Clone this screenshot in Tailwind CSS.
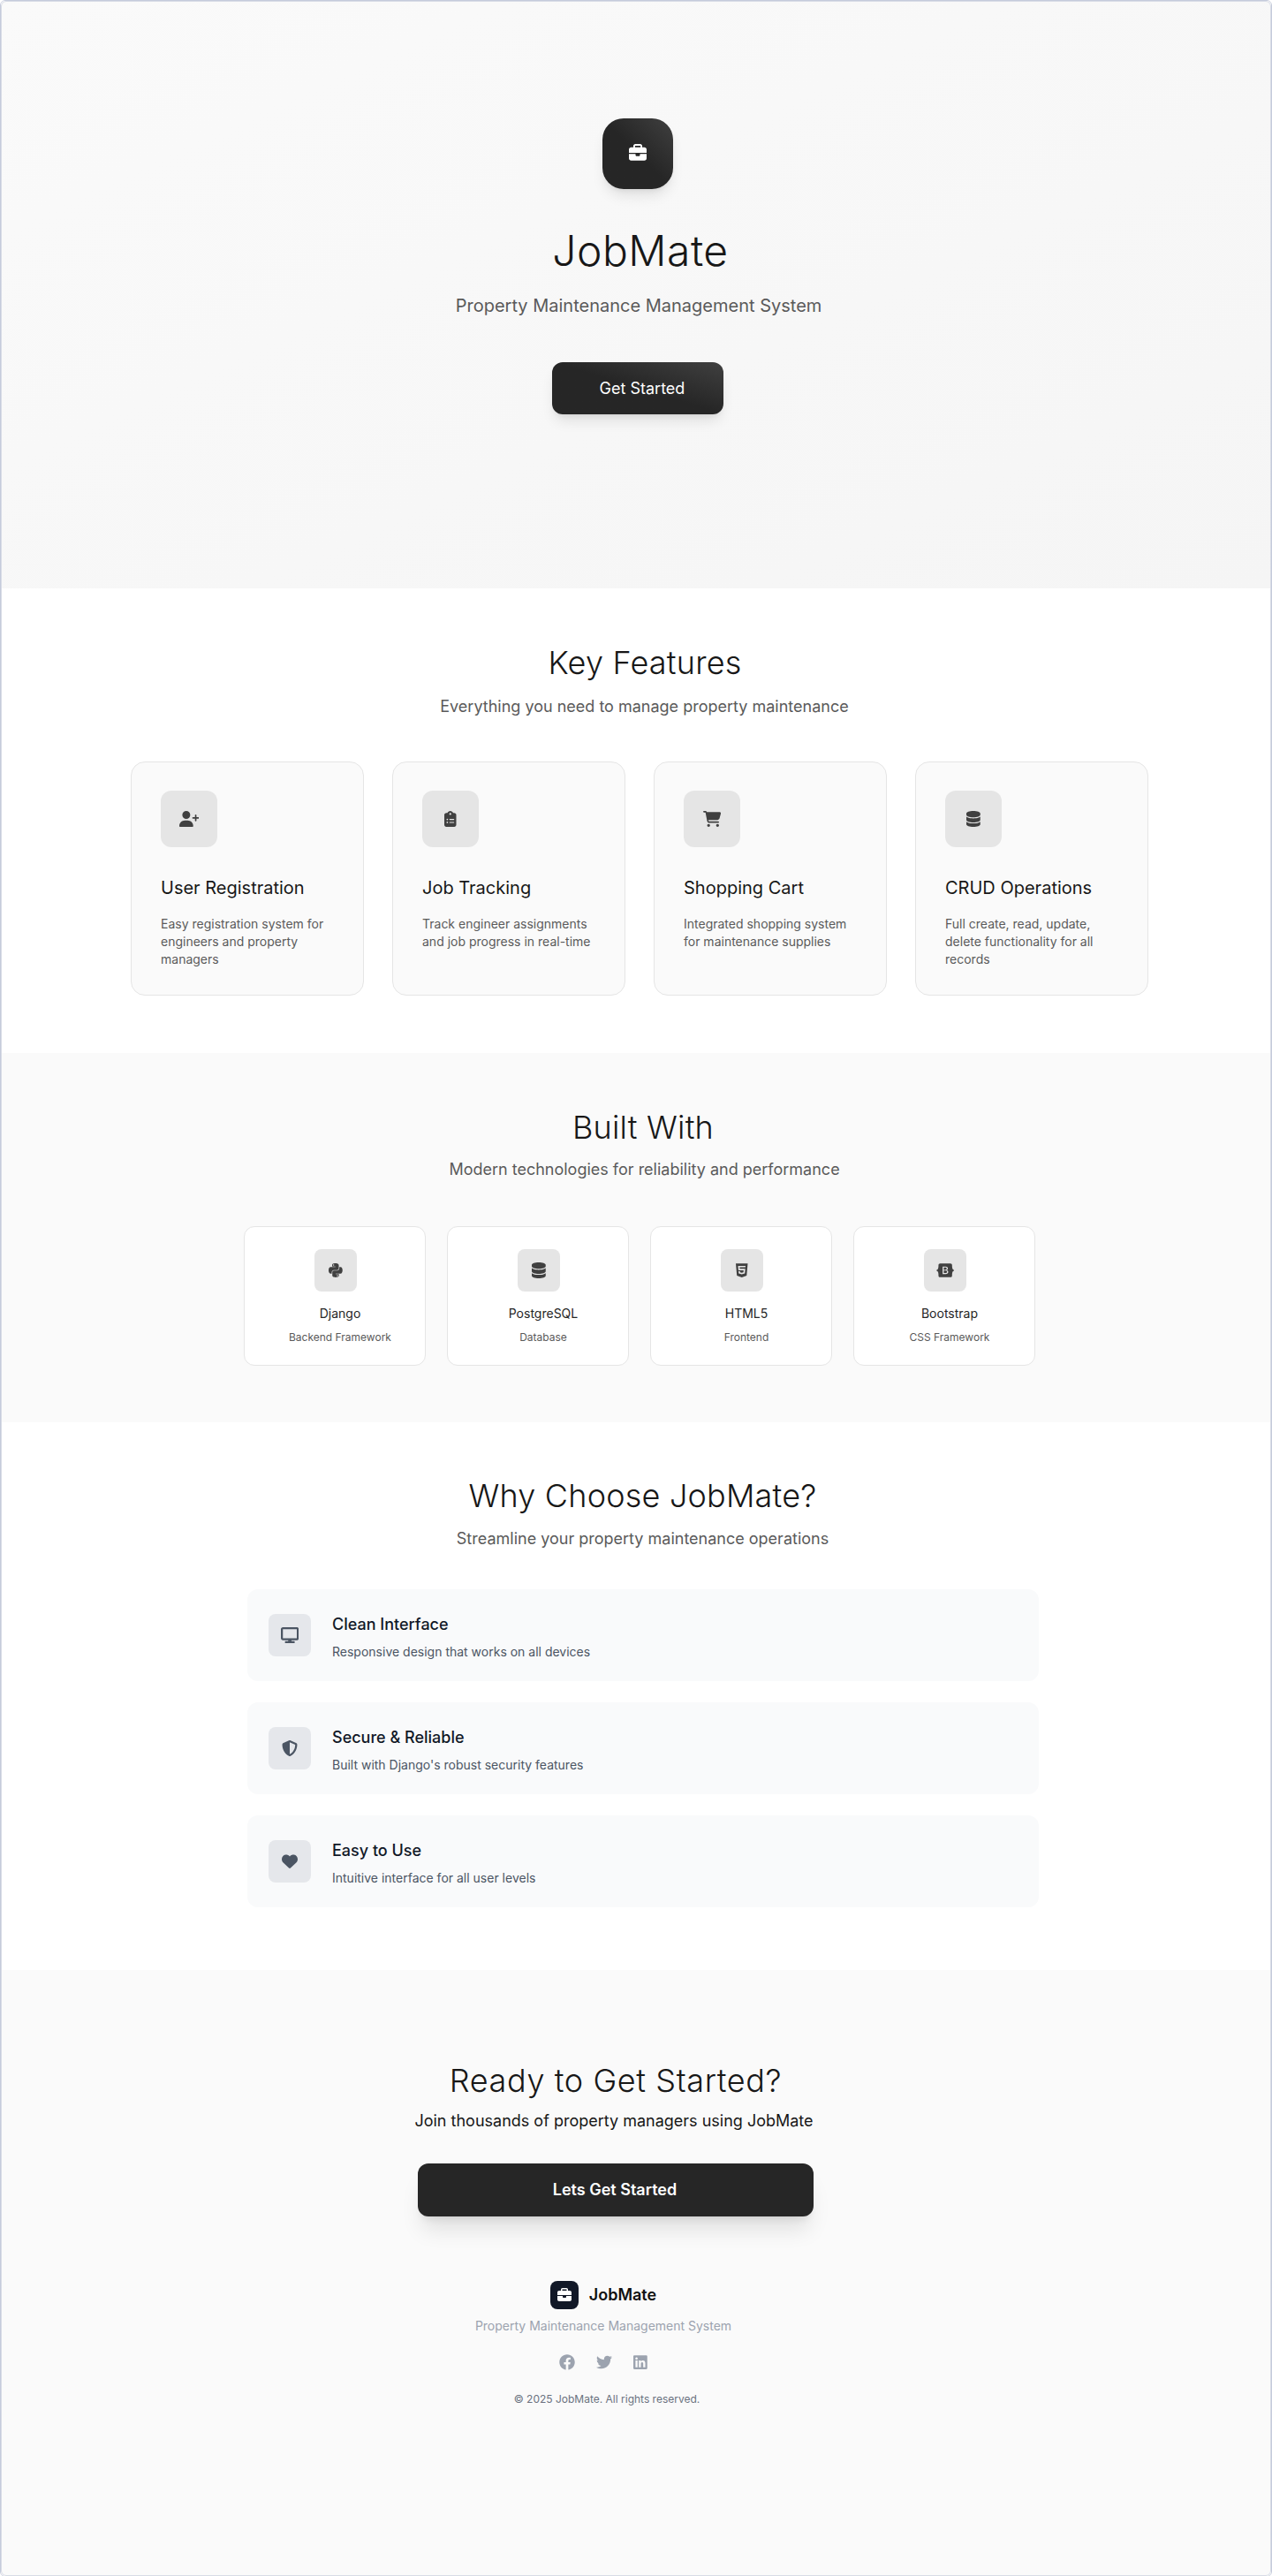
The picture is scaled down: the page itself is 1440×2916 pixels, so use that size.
<!DOCTYPE html>
<html lang="en">
<head>
    <meta charset="UTF-8">
    <meta name="viewport" content="width=device-width, initial-scale=1.0">
    <title>JobMate</title>
    <script src="https://cdn.jsdelivr.net/npm/@tailwindcss/browser@4"></script>
</head>
<body class="bg-white font-['Inter',sans-serif]">
    <div class="relative min-h-[2916px] overflow-hidden rounded-md border border-[#c5cbdb]">
        <!-- Hero -->
        <section class="flex h-[665px] flex-col items-center bg-gradient-to-br from-[#fafafa] to-[#f5f5f5] pt-[133px] pl-[4px]">
            <div class="flex h-20 w-20 items-center justify-center rounded-3xl bg-gradient-to-tr from-[#262626] via-[#262626] to-[#404040] shadow-lg">
                <svg class="-mt-[2px] h-5 w-5" viewBox="0 0 512 512" fill="#fff"><path d="M184 48H328c4.400 0 8 3.600 8 8V96H176V56c0-4.400 3.600-8 8-8zm-56 8V96H64C28.700 96 0 124.700 0 160v96H192 320 512V160c0-35.300-28.700-64-64-64H384V56c0-30.900-25.100-56-56-56H184c-30.900 0-56 25.100-56 56zM512 288H320v32c0 17.700-14.300 32-32 32H224c-17.700 0-32-14.300-32-32V288H0V416c0 35.300 28.700 64 64 64H448c35.300 0 64-28.700 64-64V288z"/></svg>
            </div>
            <h1 class="mt-[46px] pl-[6px] text-5xl leading-[48px] font-light tracking-[.5px] text-[#171717]">JobMate</h1>
            <p class="mt-6 pl-[2px] text-xl font-normal text-[#5a5a5a]">Property Maintenance Management System</p>
            <button class="mt-[50px] h-[59px] w-[194px] rounded-xl bg-gradient-to-tr from-[#262626] via-[#262626] to-[#404040] pl-[10px] text-lg font-normal text-white shadow-lg">Get Started</button>
        </section>

        <!-- Key Features -->
        <section class="bg-white pt-16 pb-[65px]">
            <h2 class="pl-[20px] text-center text-4xl font-light tracking-[.2px] text-[#171717]">Key Features</h2>
            <p class="mt-4 pl-[19px] text-center text-lg font-normal text-[#5a5a5a]">Everything you need to manage property maintenance</p>
            <div class="mt-12 ml-[147px] grid w-[1152px] grid-cols-4 gap-8">
                <div class="h-[265px] rounded-2xl border border-[#e5e5e5] bg-[#fafafa] py-8 pr-6 pl-[33px]">
                    <div class="flex h-16 w-16 items-center justify-center rounded-xl bg-[#e5e5e5]">
                        <svg class="h-[18px] w-[22.500px]" viewBox="0 0 640 512" fill="#404040"><path d="M96 128a128 128 0 1 1 256 0A128 128 0 1 1 96 128zM0 482.300C0 383.800 79.800 304 178.300 304h91.400C368.200 304 448 383.800 448 482.300c0 16.400-13.300 29.700-29.700 29.700H29.700C13.300 512 0 498.700 0 482.300zM504 312V248H440c-13.300 0-24-10.700-24-24s10.700-24 24-24h64V136c0-13.300 10.700-24 24-24s24 10.700 24 24v64h64c13.300 0 24 10.700 24 24s-10.700 24-24 24H552v64c0 13.300-10.700 24-24 24s-24-10.700-24-24z"/></svg>
                    </div>
                    <h3 class="mt-8 text-xl font-normal text-[#171717]">User Registration</h3>
                    <p class="mt-[17px] text-sm font-normal text-[#5a5a5a]">Easy registration system for engineers and property managers</p>
                </div>
                <div class="h-[265px] rounded-2xl border border-[#e5e5e5] bg-[#fafafa] py-8 pr-6 pl-[33px]">
                    <div class="flex h-16 w-16 items-center justify-center rounded-xl bg-[#e5e5e5]">
                        <svg class="h-[18px] w-[13.500px]" viewBox="0 0 384 512" fill="#404040"><path fill-rule="evenodd" d="M192 0c-41.800 0-77.400 26.700-90.500 64H64C28.700 64 0 92.700 0 128V448c0 35.300 28.700 64 64 64H320c35.300 0 64-28.700 64-64V128c0-35.300-28.700-64-64-64H282.500C269.400 26.700 233.800 0 192 0zm0 64a32 32 0 1 1 0 64 32 32 0 1 1 0-64zM72 272a24 24 0 1 1 48 0 24 24 0 1 1 -48 0zm104-16H304c8.800 0 16 7.200 16 16s-7.200 16-16 16H176c-8.800 0-16-7.200-16-16s7.200-16 16-16zM72 368a24 24 0 1 1 48 0 24 24 0 1 1 -48 0zm88 0c0-8.800 7.200-16 16-16H304c8.800 0 16 7.200 16 16s-7.200 16-16 16H176c-8.800 0-16-7.200-16-16z"/></svg>
                    </div>
                    <h3 class="mt-8 text-xl font-normal text-[#171717]">Job Tracking</h3>
                    <p class="mt-[17px] text-sm font-normal text-[#5a5a5a]">Track engineer assignments and job progress in real-time</p>
                </div>
                <div class="h-[265px] rounded-2xl border border-[#e5e5e5] bg-[#fafafa] py-8 pr-6 pl-[33px]">
                    <div class="flex h-16 w-16 items-center justify-center rounded-xl bg-[#e5e5e5]">
                        <svg class="h-[18px] w-[20.250px]" viewBox="0 0 576 512" fill="#404040"><path d="M0 24C0 10.700 10.700 0 24 0H69.500c22 0 41.500 12.800 50.600 32h411c26.300 0 45.500 25 38.600 50.400l-41 152.300c-8.500 31.400-37 53.300-69.500 53.300H170.700l5.400 28.500c2.200 11.300 12.100 19.500 23.600 19.500H488c13.300 0 24 10.700 24 24s-10.700 24-24 24H199.700c-34.600 0-64.300-24.600-70.700-58.500L77.400 54.500c-.7-3.800-4-6.500-7.900-6.500H24C10.700 48 0 37.300 0 24zM128 464a48 48 0 1 1 96 0 48 48 0 1 1 -96 0zm336-48a48 48 0 1 1 0 96 48 48 0 1 1 0-96z"/></svg>
                    </div>
                    <h3 class="mt-8 text-xl font-normal text-[#171717]">Shopping Cart</h3>
                    <p class="mt-[17px] text-sm font-normal text-[#5a5a5a]">Integrated shopping system for maintenance supplies</p>
                </div>
                <div class="h-[265px] rounded-2xl border border-[#e5e5e5] bg-[#fafafa] py-8 pr-6 pl-[33px]">
                    <div class="flex h-16 w-16 items-center justify-center rounded-xl bg-[#e5e5e5]">
                        <svg class="h-[18px] w-[15.750px]" viewBox="0 0 448 512" fill="#404040"><path d="M448 80v48c0 44.200-100.300 80-224 80S0 172.200 0 128V80C0 35.800 100.300 0 224 0S448 35.800 448 80zM393.200 214.700c20.800-7.400 39.900-16.900 54.800-28.600V288c0 44.200-100.300 80-224 80S0 332.200 0 288V186.100c14.900 11.800 34 21.200 54.800 28.600C99.700 230.700 159.500 240 224 240s124.300-9.300 169.200-25.300zM0 346.100c14.900 11.800 34 21.200 54.800 28.600C99.700 390.700 159.500 400 224 400s124.300-9.300 169.200-25.300c20.800-7.400 39.900-16.900 54.800-28.600V432c0 44.200-100.300 80-224 80S0 476.200 0 432V346.100z"/></svg>
                    </div>
                    <h3 class="mt-8 text-xl font-normal text-[#171717]">CRUD Operations</h3>
                    <p class="mt-[17px] text-sm font-normal text-[#5a5a5a]">Full create, read, update, delete functionality for all records</p>
                </div>
            </div>
        </section>

        <!-- Built With -->
        <section class="bg-[#fafafa] pt-16 pb-16">
            <h2 class="pl-[16px] text-center text-4xl font-light tracking-[.2px] text-[#171717]">Built With</h2>
            <p class="mt-3.5 pl-[19px] text-center text-lg font-normal text-[#5a5a5a]">Modern technologies for reliability and performance</p>
            <div class="mt-[50px] ml-[275px] grid w-[896px] grid-cols-4 gap-6">
                <div class="flex h-[158px] flex-col items-center rounded-xl border border-[#e5e5e5] bg-white pt-[25px] pl-[2px]">
                    <div class="flex h-12 w-12 items-center justify-center rounded-lg bg-[#e5e5e5]">
                        <svg class="h-[18px] w-[15.750px]" viewBox="0 0 448 512" fill="#404040"><path fill-rule="evenodd" d="M439.800 200.500c-7.700-30.900-22.300-54.200-53.400-54.200h-40.100v47.400c0 36.800-31.200 67.800-66.800 67.800H172.700c-29.200 0-53.400 25-53.400 54.300v101.800c0 29 25.200 46 53.400 54.300 33.800 9.900 66.300 11.700 106.800 0 26.900-7.800 53.400-23.500 53.400-54.300v-40.700H226.200v-13.600h160.200c31.100 0 42.600-21.700 53.400-54.200 11.200-33.500 10.700-65.700 0-108.600zM286.200 404c11.100 0 20.100 9.100 20.100 20.300 0 11.300-9 20.400-20.100 20.400-11 0-20.100-9.200-20.100-20.400.1-11.300 9.100-20.300 20.100-20.300zM167.800 248.100h106.800c29.700 0 53.400-24.500 53.400-54.300V91.900c0-29-24.400-50.700-53.400-55.600-35.800-5.900-74.700-5.600-106.800.1-45.200 8-53.400 24.700-53.400 55.600v40.700h106.900v13.600h-147c-31.100 0-58.300 18.700-66.800 54.200-9.800 40.700-10.200 66.100 0 108.600 7.600 31.600 25.700 54.200 56.800 54.200H101v-48.800c0-35.300 30.500-66.400 66.800-66.400zm-6.700-142.600c-11.100 0-20.100-9.100-20.100-20.300.1-11.300 9-20.400 20.100-20.400 11 0 20.100 9.200 20.100 20.400s-9 20.300-20.100 20.300z"/></svg>
                    </div>
                    <span class="mt-[15px] pl-[10px] text-sm text-[#262626]">Django</span>
                    <span class="mt-[9px] pl-[10px] text-xs text-[#5a5a5a]">Backend Framework</span>
                </div>
                <div class="flex h-[158px] flex-col items-center rounded-xl border border-[#e5e5e5] bg-white pt-[25px] pl-[2px]">
                    <div class="flex h-12 w-12 items-center justify-center rounded-lg bg-[#e5e5e5]">
                        <svg class="h-[18px] w-[15.750px]" viewBox="0 0 448 512" fill="#404040"><path d="M448 80v48c0 44.200-100.300 80-224 80S0 172.200 0 128V80C0 35.800 100.300 0 224 0S448 35.800 448 80zM393.200 214.700c20.800-7.400 39.900-16.900 54.800-28.600V288c0 44.200-100.300 80-224 80S0 332.200 0 288V186.100c14.900 11.800 34 21.200 54.800 28.600C99.700 230.700 159.500 240 224 240s124.300-9.300 169.200-25.300zM0 346.100c14.900 11.800 34 21.200 54.800 28.600C99.700 390.700 159.500 400 224 400s124.300-9.300 169.200-25.300c20.800-7.400 39.900-16.900 54.800-28.600V432c0 44.200-100.300 80-224 80S0 476.200 0 432V346.100z"/></svg>
                    </div>
                    <span class="mt-[15px] pl-[10px] text-sm text-[#262626]">PostgreSQL</span>
                    <span class="mt-[9px] pl-[10px] text-xs text-[#5a5a5a]">Database</span>
                </div>
                <div class="flex h-[158px] flex-col items-center rounded-xl border border-[#e5e5e5] bg-white pt-[25px] pl-[2px]">
                    <div class="flex h-12 w-12 items-center justify-center rounded-lg bg-[#e5e5e5]">
                        <svg class="h-[18px] w-[13.500px]" viewBox="0 0 384 512" fill="#404040"><path fill-rule="evenodd" d="M0 32l34.900 395.800L191.500 480l157.600-52.200L384 32H0zm308.200 127.900H124.400l4.100 49.400h175.600l-13.600 148.400-97.900 27v.3h-1.100l-98.700-27.300-6-75.800h47.700L138 320l53.500 14.500 53.700-14.500 6-62.200H84.300L71.500 112.200h241.100l-4.400 47.700z"/></svg>
                    </div>
                    <span class="mt-[15px] pl-[10px] text-sm text-[#262626]">HTML5</span>
                    <span class="mt-[9px] pl-[10px] text-xs text-[#5a5a5a]">Frontend</span>
                </div>
                <div class="flex h-[158px] flex-col items-center rounded-xl border border-[#e5e5e5] bg-white pt-[25px] pl-[2px]">
                    <div class="flex h-12 w-12 items-center justify-center rounded-lg bg-[#e5e5e5]">
                        <svg class="h-[18px] w-[20.250px]" viewBox="0 0 576 512" fill="#404040"><path fill-rule="evenodd" d="M333.500 201.400c0-22.100-15.600-34.300-43-34.300h-50.400v71.200h42.500C315.400 238.200 333.500 225 333.500 201.400zM517 188.600c-9.500-30.900-10.900-68.800-9.800-98.100c1.100-30.500-22.700-58.500-54.700-58.500H123.700c-32.100 0-55.800 28.100-54.700 58.500c1 29.300-.3 67.200-9.800 98.100c-9.600 31-25.700 50.600-52.200 53.100v28.500c26.400 2.500 42.600 22.100 52.200 53.100c9.500 30.900 10.900 68.800 9.800 98.100c-1.100 30.500 22.700 58.500 54.700 58.500h328.700c32.100 0 55.800-28.100 54.700-58.500c-1-29.300 .3-67.200 9.800-98.100c9.600-31 25.700-50.600 52.100-53.100v-28.500C542.700 239.200 526.500 219.600 517 188.600zM300.200 375.100h-97.900V136.800h97.400c43.300 0 71.700 23.400 71.700 59.400c0 25.300-19.100 47.900-43.500 51.800v1.300c33.200 3.600 55.500 26.600 55.500 58.300C383.400 349.700 352.100 375.100 300.200 375.100zM290.200 266.400h-50.100v78.400h52.300c34.200 0 52.300-13.700 52.300-39.500C344.700 279.600 326.100 266.400 290.200 266.400z"/></svg>
                    </div>
                    <span class="mt-[15px] pl-[10px] text-sm text-[#262626]">Bootstrap</span>
                    <span class="mt-[9px] pl-[10px] text-xs text-[#5a5a5a]">CSS Framework</span>
                </div>
            </div>
        </section>

        <!-- Why Choose -->
        <section class="bg-white pt-[63px] pb-[71px]">
            <h2 class="pl-[15px] text-center text-4xl font-light tracking-[.2px] text-[#171717]">Why Choose JobMate?</h2>
            <p class="mt-[15px] pl-[15px] text-center text-lg font-normal text-[#5a5a5a]">Streamline your property maintenance operations</p>
            <div class="mt-[43px] ml-[279px] flex w-[896px] flex-col gap-6">
                <div class="flex h-[104px] items-center gap-6 rounded-xl bg-[#f9fafb] px-6">
                    <div class="flex h-12 w-12 items-center justify-center rounded-lg bg-[#e5e7eb]">
                        <svg class="h-[18px] w-[20.250px]" viewBox="0 0 576 512" fill="#4b5563"><path fill-rule="evenodd" d="M64 0C28.700 0 0 28.700 0 64V352c0 35.300 28.700 64 64 64H240l-10.700 32H160c-17.700 0-32 14.300-32 32s14.300 32 32 32H416c17.700 0 32-14.300 32-32s-14.300-32-32-32H346.700L336 416H512c35.300 0 64-28.700 64-64V64c0-35.300-28.700-64-64-64H64zM512 64V352H64V64H512z"/></svg>
                    </div>
                    <div class="pt-[2px]">
                        <h3 class="text-lg font-[550] leading-7 text-[#111827]">Clean Interface</h3>
                        <p class="mt-[7px] text-sm text-[#4b5563]">Responsive design that works on all devices</p>
                    </div>
                </div>
                <div class="flex h-[104px] items-center gap-6 rounded-xl bg-[#f9fafb] px-6">
                    <div class="flex h-12 w-12 items-center justify-center rounded-lg bg-[#e5e7eb]">
                        <svg class="h-[18px] w-[18px]" viewBox="0 0 512 512" fill="#4b5563"><path fill-rule="evenodd" d="M256 0c4.600 0 9.200 1 13.400 2.900L457.700 82.800c22 9.300 38.400 31 38.300 57.200c-.5 99.200-41.300 280.700-213.600 363.200c-16.700 8-36.100 8-52.800 0C57.300 420.700 16.500 239.200 16 140c-.1-26.200 16.300-47.900 38.300-57.200L242.700 2.900C246.800 1 251.400 0 256 0zm0 66.800V444.800C394 378 431.100 230.100 432 141.400L256 66.800l0 0z"/></svg>
                    </div>
                    <div class="pt-[2px]">
                        <h3 class="text-lg font-[550] leading-7 text-[#111827]">Secure &amp; Reliable</h3>
                        <p class="mt-[7px] text-sm text-[#4b5563]">Built with Django's robust security features</p>
                    </div>
                </div>
                <div class="flex h-[104px] items-center gap-6 rounded-xl bg-[#f9fafb] px-6">
                    <div class="flex h-12 w-12 items-center justify-center rounded-lg bg-[#e5e7eb]">
                        <svg class="h-[18px] w-[18px]" viewBox="0 0 512 512" fill="#4b5563"><path d="M47.600 300.400L228.300 469.100c7.500 7 17.400 10.900 27.700 10.900s20.200-3.900 27.700-10.900L464.400 300.400c30.400-28.300 47.600-68 47.600-109.500v-5.800c0-69.900-50.500-129.500-119.400-141C347 36.500 300.600 51.400 268 84L256 96 244 84c-32.600-32.600-79-47.500-124.600-39.900C50.500 55.600 0 115.200 0 185.100v5.800c0 41.500 17.200 81.200 47.600 109.500z"/></svg>
                    </div>
                    <div class="pt-[2px]">
                        <h3 class="text-lg font-[550] leading-7 text-[#111827]">Easy to Use</h3>
                        <p class="mt-[7px] text-sm text-[#4b5563]">Intuitive interface for all user levels</p>
                    </div>
                </div>
            </div>
        </section>

        <!-- Call to action and footer -->
        <section class="flex min-h-[686px] flex-col bg-[#fafafa] pt-[105px]">
            <div class="ml-[472px] flex w-[448px] flex-col items-center">
                <h2 class="text-4xl font-light tracking-[.6px] text-[#171717]">Ready to Get Started?</h2>
                <p class="mt-3 pr-[4px] text-lg whitespace-nowrap text-[#171717]">Join thousands of property managers using JobMate</p>
                <button class="mt-[34px] h-[60px] w-[448px] rounded-xl bg-[#262626] pr-[2px] text-lg font-semibold text-white shadow-xl">Lets Get Started</button>
            </div>
            <div class="mt-[73px] ml-[536px] flex w-[292px] flex-col items-center">
                <div class="flex items-center gap-3">
                    <div class="flex h-8 w-8 items-center justify-center rounded-lg bg-[#111827]">
                        <svg class="h-4 w-4" viewBox="0 0 512 512" fill="#fff"><path d="M184 48H328c4.400 0 8 3.600 8 8V96H176V56c0-4.400 3.600-8 8-8zm-56 8V96H64C28.700 96 0 124.700 0 160v96H192 320 512V160c0-35.300-28.700-64-64-64H384V56c0-30.900-25.100-56-56-56H184c-30.900 0-56 25.100-56 56zM512 288H320v32c0 17.700-14.300 32-32 32H224c-17.700 0-32-14.300-32-32V288H0V416c0 35.300 28.700 64 64 64H448c35.300 0 64-28.700 64-64V288z"/></svg>
                    </div>
                    <span class="text-lg font-semibold text-[#111111]">JobMate</span>
                </div>
                <p class="mt-[9px] text-sm text-[#9ca3af]">Property Maintenance Management System</p>
                <div class="mt-[22px] flex items-center gap-6">
                    <svg class="h-[18px] w-[18px]" viewBox="0 0 512 512" fill="#9ca3af"><path d="M504 256C504 119 393 8 256 8S8 119 8 256c0 123.780 90.690 226.380 209.250 245V327.690h-63V256h63v-54.640c0-62.150 37-96.480 93.670-96.480 27.140 0 55.520 4.840 55.520 4.840v61h-31.280c-30.800 0-40.410 19.120-40.410 38.730V256h68.780l-11 71.690h-57.780V501C413.310 482.380 504 379.780 504 256z"/></svg>
                    <svg class="h-[18px] w-[18px]" viewBox="0 0 512 512" fill="#9ca3af"><path d="M459.370 151.716c.325 4.548.325 9.097.325 13.645 0 138.720-105.583 298.558-298.558 298.558-59.452 0-114.680-17.219-161.137-47.106 8.447.974 16.568 1.299 25.340 1.299 49.055 0 94.213-16.568 130.274-44.832-46.132-.975-84.792-31.188-98.112-72.772 6.498.974 12.995 1.624 19.818 1.624 9.421 0 18.843-1.300 27.614-3.573-48.081-9.747-84.143-51.980-84.143-102.985v-1.299c13.969 7.797 30.214 12.670 47.431 13.319-28.264-18.843-46.781-51.005-46.781-87.391 0-19.492 5.197-37.360 14.294-52.954 51.655 63.675 129.300 105.258 216.365 109.807-1.624-7.797-2.599-15.918-2.599-24.040 0-57.828 46.782-104.934 104.934-104.934 30.213 0 57.502 12.670 76.670 33.137 23.715-4.548 46.456-13.320 66.599-25.340-7.798 24.366-24.366 44.833-46.132 57.827 21.117-2.273 41.584-8.122 60.426-16.243-14.292 20.791-32.161 39.308-52.628 54.253z"/></svg>
                    <svg class="h-[18px] w-[15.750px]" viewBox="0 0 448 512" fill="#9ca3af"><path fill-rule="evenodd" d="M416 32H31.900C14.300 32 0 46.500 0 64.300v383.400C0 465.500 14.300 480 31.900 480H416c17.600 0 32-14.500 32-32.300V64.300c0-17.800-14.400-32.300-32-32.300zM135.400 416H69V202.200h66.500V416zm-33.200-243c-21.300 0-38.500-17.300-38.500-38.500S80.900 96 102.200 96c21.200 0 38.500 17.300 38.500 38.500 0 21.300-17.200 38.500-38.500 38.500zm282.100 243h-66.400V312c0-24.800-.5-56.700-34.500-56.700-34.600 0-39.900 27-39.900 54.900V416h-66.400V202.200h63.700v29.200h.9c8.900-16.800 30.600-34.500 62.900-34.500 67.200 0 79.700 44.300 79.700 101.900V416z"/></svg>
                </div>
                <p class="mt-[25px] pl-[8px] text-xs text-[#6b7280]">© 2025 JobMate. All rights reserved.</p>
            </div>
        </section>

        <!-- Second line of the page frame, drawn over the sections -->
        <div class="pointer-events-none absolute inset-0 rounded-md border border-[#d8dce6]"></div>
    </div>
</body>
</html>
